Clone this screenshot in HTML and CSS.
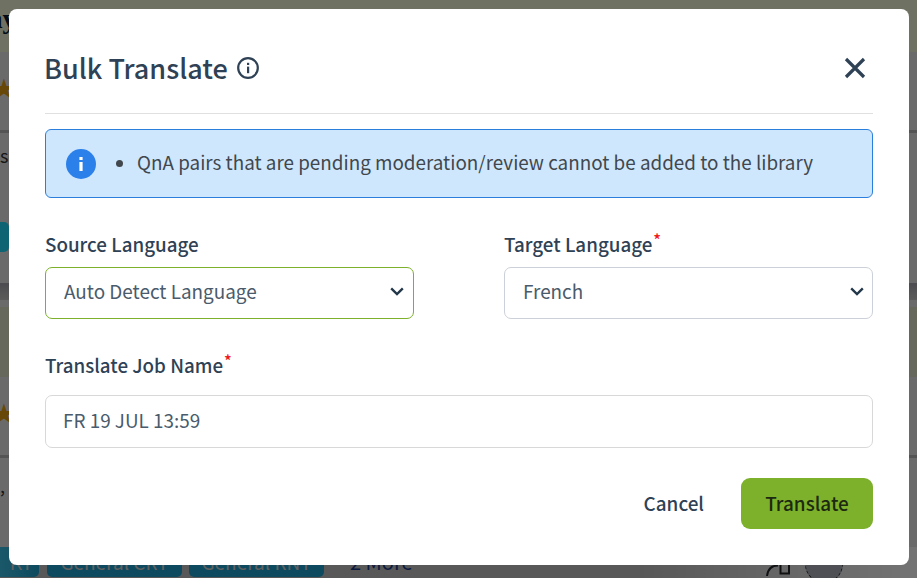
FILE: index.html
```html
<!DOCTYPE html>
<html lang="en">
<head>
<meta charset="utf-8">
<title>Bulk Translate</title>
<link rel="stylesheet" href="styles.css">
</head>
<body>
<div class="page">
  <section class="card">
    <header class="card-head"><span class="card-title">ny<span class="card-title-rest">Acid</span></span></header>
    <div class="card-meta"><span class="star">★</span></div>
    <div class="card-rule"></div>
    <p class="card-text">sc</p>
    <div class="tags"><span class="tag tag-first"></span></div>
  </section>
  <section class="card card-second">
    <header class="card-head"></header>
    <div class="card-meta"><span class="star">★</span></div>
    <div class="card-rule"></div>
    <p class="card-text">,</p>
    <div class="tags tags-last">
      <span class="tag tag-first">KT</span><span class="tag tag-wide">General CRT</span><span class="tag tag-wide tag-next">General RNT</span><span class="more">2 More</span>
      <span class="tag-tools">
        <svg class="tool-share" width="24" height="24" viewBox="0 0 24 24" aria-hidden="true"><path d="M1 24 C2 16 6 13.500 12 13.500 M14.500 13 V21.500 H23 V13" fill="none" stroke="#24272b" stroke-width="2"/></svg>
        <span class="tool-circle"></span>
      </span>
    </div>
  </section>
</div>
<div class="overlay"></div>
<div class="modal" role="dialog" aria-labelledby="modal-title">
  <header class="modal-head">
    <h2 class="modal-title" id="modal-title">Bulk Translate</h2>
    <svg class="title-info" width="22" height="22" viewBox="0 0 22 22" aria-hidden="true">
      <circle cx="11" cy="11" r="9.800" fill="none" stroke="#2f4255" stroke-width="2.200"/>
      <rect x="10" y="9.600" width="2.200" height="6.600" fill="#2f4255"/>
      <rect x="10" y="5.800" width="2.200" height="2.200" fill="#2f4255"/>
    </svg>
    <button class="close" type="button" aria-label="Close">
      <svg width="22" height="22" viewBox="0 0 22 22" aria-hidden="true"><path d="M2 2 L20 20 M20 2 L2 20" stroke="#2f4255" stroke-width="3.200"/></svg>
    </button>
  </header>
  <div class="alert">
    <svg class="alert-icon" width="30" height="30" viewBox="0 0 30 30" aria-hidden="true">
      <circle cx="15" cy="15" r="15" fill="#2b80ea"/>
      <rect x="13.400" y="13" width="3.200" height="9" fill="#fff"/>
      <rect x="13.400" y="8" width="3.200" height="3" fill="#fff"/>
    </svg>
    <ul class="alert-list"><li>QnA pairs that are pending moderation/review cannot be added to the library</li></ul>
  </div>
  <div class="field-row">
    <div class="field">
      <label class="label" for="src">Source Language</label>
      <div class="select-wrap">
        <select id="src" class="control control-focus"><option>Auto Detect Language</option></select>
        <svg class="chevron" width="14" height="9" viewBox="0 0 14 9" aria-hidden="true"><path d="M1.200 1.400 L7 7 L12.800 1.400" fill="none" stroke="#22384a" stroke-width="2.400"/></svg>
      </div>
    </div>
    <div class="field">
      <label class="label" for="tgt">Target Language<sup class="req">*</sup></label>
      <div class="select-wrap">
        <select id="tgt" class="control"><option>French</option></select>
        <svg class="chevron chevron-right" width="14" height="9" viewBox="0 0 14 9" aria-hidden="true"><path d="M1.200 1.400 L7 7 L12.800 1.400" fill="none" stroke="#22384a" stroke-width="2.400"/></svg>
      </div>
    </div>
  </div>
  <div class="field field-job">
    <label class="label" for="job">Translate Job Name<sup class="req">*</sup></label>
    <input id="job" class="control control-input" type="text" value="FR 19 JUL 13:59">
  </div>
  <footer class="modal-foot">
    <button class="btn btn-cancel" type="button">Cancel</button>
    <button class="btn btn-primary" type="button">Translate</button>
  </footer>
</div>
</body>
</html>
```

FILE: styles.css
```css
* { box-sizing: border-box; }
html, body { margin: 0; height: 100%; overflow: hidden; }
body { font-family: "Noto Sans CJK SC", "Noto Sans", sans-serif; background: #ebebeb; }

.page { height: 578px; overflow: hidden; display: flex; flex-direction: column; background: linear-gradient(#a9a9b2 283px, #c8c8c8 300px); }
.card { flex: none; height: 283px; background: #ebebeb; display: flex; flex-direction: column; }
.card-second { height: 278px; margin-top: 17px; }
.card-head { height: 52px; flex: none; background: #f7fbdc; overflow: hidden; }
.card-second .card-head { height: 77px; background: linear-gradient(#ebebeb 7px, #e0e7c8 7px); }
.card-title { display: block; font-family: "Liberation Serif", serif; font-size: 28px; font-weight: 700; line-height: 32px; margin-top: 3px; margin-left: -13px; color: #0c1c33; white-space: nowrap; }
.card-title-rest { margin-left: 16px; }
.card-meta { height: 78px; flex: none; padding-top: 22px; }
.star { color: #e6a013; font-size: 22px; line-height: 24px; display: block; margin-left: -7px; }
.card-rule { height: 3px; flex: none; background: #bbb; }
.card-text { margin: 0; height: 89px; flex: none; padding-top: 10px; font-size: 18px; line-height: 24px; color: #333; white-space: nowrap; }
.card-second .card-text { padding-top: 15px; }
.tags { display: flex; height: 30px; flex: none; }
.tag { background: #20deff; color: #d4d4d4; font-size: 19px; line-height: 30px; border-radius: 0 5px 5px 0; width: 9px; overflow: hidden; white-space: nowrap; }
.tags-last { gap: 8px; align-items: flex-start; height: 31px; background: linear-gradient(to right, #c4c4c4 70%, #fff); }
.tags-last .tag-first { width: 39px; text-align: right; padding-right: 6px; background: linear-gradient(to right, #3ac4e8, #21a4d3); border-radius: 0 5px 5px 0; }
.tags-last .tag-wide { width: 135px; text-align: center; border-radius: 5px; background: #21a4d3; }
.tags-last .tag-next { margin-left: -1px; }
.more { color: #1a3a8a; font-size: 20px; line-height: 30px; margin-left: 18px; }
.tag-tools { display: flex; gap: 15px; margin-left: auto; margin-right: 74px; margin-top: 5px; }
.tool-circle { width: 38px; height: 38px; margin-top: -7px; border-radius: 50%; background: #adb2bd; border: 1px dashed #333; }

.overlay { position: fixed; inset: 0; background: rgba(0, 0, 0, .55); }

.modal { position: fixed; left: 9px; top: 9px; width: 900px; height: 556px; background: #fff; border-radius: 8px; padding: 0 36px; display: flex; flex-direction: column; color: #2f4255; }
.modal-head { height: 105px; flex: none; display: flex; align-items: center; border-bottom: 1px solid #e0e0e0; padding-top: 14px; }
.modal-title { margin: 0 0 0 -1px; font-size: 27px; font-weight: 500; line-height: 36px; }
.title-info { margin-left: 9px; }
.close { margin-left: auto; margin-right: 7px; padding: 0; border: 0; background: none; display: flex; }

.alert { margin-top: 15px; height: 69px; flex: none; display: flex; align-items: center; padding-left: 20px; background: #cfe7fd; border: 1px solid #2b7fdc; border-radius: 6px; }
.alert-list { margin: 0; padding: 0 0 3px 41px; color: #41474d; font-size: 18.85px; line-height: 28px; }

.field-row { display: grid; grid-template-columns: 369px 369px; column-gap: 90px; margin-top: 31px; }
.field { display: flex; flex-direction: column; }
.label { font-size: 18.8px; font-weight: 500; line-height: 30px; height: 38px; color: #2f4255; }
.req { color: #f01818; font-size: 16px; line-height: 0; vertical-align: 6px; margin-left: 1px; }
.select-wrap { position: relative; display: flex; }
.control { width: 100%; height: 52px; border: 1px solid #ccd0d8; border-radius: 7px; background: #fff; font: inherit; font-size: 18.9px; color: #4a5b6b; padding: 0 18px 6px; appearance: none; outline: 0; }
.control-focus { border-color: #7db02b; }
.control-input { height: 53px; border-color: #d8d8d8; padding: 0 17px 4px; }
.chevron { position: absolute; right: 10px; top: 20px; pointer-events: none; }
.chevron-right { right: 9px; }

.field-job { margin-top: 31px; }
.field-job .label { height: 45px; }

.modal-foot { margin-top: 30px; display: flex; justify-content: flex-end; align-items: center; }
.btn { font: inherit; font-size: 18.9px; font-weight: 500; border: 0; padding: 0 0 2px; cursor: pointer; }
.btn-cancel { background: none; color: #2f4255; margin-right: 37px; }
.btn-primary { width: 132px; height: 51px; background: #7db02b; color: #1c2a12; border-radius: 9px; }
```
